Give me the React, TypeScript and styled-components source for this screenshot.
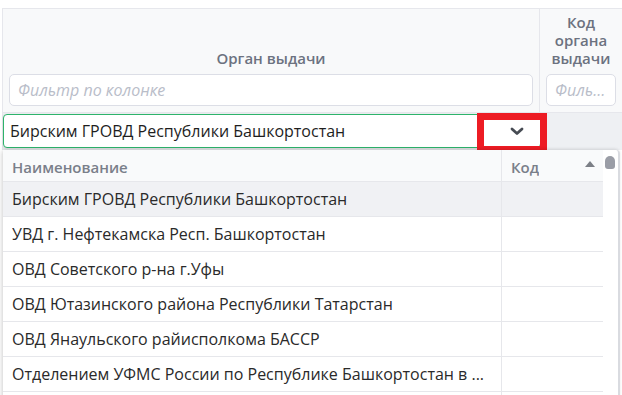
import React from "react";
import styled, { createGlobalStyle } from "styled-components";

interface Option {
    name: string;
    code: string;
}

const options: Option[] = [
    { name: "Бирским ГРОВД Республики Башкортостан", code: "" },
    { name: "УВД г. Нефтекамска Респ. Башкортостан", code: "" },
    { name: "ОВД Советского р-на г.Уфы", code: "" },
    { name: "ОВД Ютазинского района Республики Татарстан", code: "" },
    { name: "ОВД Янаульского райисполкома БАССР", code: "" },
    { name: "Отделением УФМС России по Республике Башкортостан в ...", code: "" },
    { name: "", code: "" },
];

const GlobalStyle = createGlobalStyle`
    html, body {
        margin: 0;
        padding: 0;
        background: #fff;
        font-family: "Open Sans", "Liberation Sans", sans-serif;
        overflow: hidden;
    }
    * { box-sizing: border-box; }
`;

const Page = styled.div`
    width: 622px;
    height: 395px;
    padding-top: 8px;
    overflow: hidden;
`;

const Grid = styled.div`
    margin-left: 2px;
    border-top: 1px solid #e6e7ec;
    border-left: 1px solid #e6e7ec;
`;

const HeaderRow = styled.div`
    display: grid;
    grid-template-columns: 537px 1fr;
    height: 104px;
    background: #f8f9fa;
    border-bottom: 1px solid #e6e7ec;
`;

const HeaderCell = styled.div<{ $last?: boolean }>`
    display: flex;
    flex-direction: column;
    justify-content: flex-end;
    padding: 0 6px 6px 6px;
    border-right: ${(p) => (p.$last ? "none" : "1px solid #e6e7ec")};
`;

const HeaderTitle = styled.div`
    text-align: center;
    font-size: 15px;
    font-weight: 600;
    line-height: 18px;
    color: #6c7280;
    margin-bottom: 7px;
`;

const FilterInput = styled.input`
    width: 100%;
    height: 32px;
    border: 1px solid #dcdee6;
    border-radius: 5px;
    background: #fff;
    padding: 0 8px;
    font-family: inherit;
    font-size: 16px;
    outline: none;
    text-overflow: ellipsis;
    &::placeholder {
        color: #b9bdc9;
        font-style: italic;
    }
`;

const EditRow = styled.div`
    position: relative;
    height: 37px;
    background: #eef0f3;
    padding-top: 1px;
`;

const Combo = styled.div`
    position: relative;
    width: 538px;
    height: 34px;
    display: flex;
    align-items: center;
    background: #fff;
    border: 1px solid #2db36b;
    border-radius: 4px;
    box-shadow: 0 1px 3px rgba(0, 0, 0, 0.12);
    padding-left: 6px;
    font-size: 16px;
    color: #1e1e1e;
`;

const ComboText = styled.span`
    flex: 1;
    white-space: nowrap;
`;

const ComboButton = styled.div`
    width: 52px;
    height: 100%;
    display: flex;
    align-items: center;
    justify-content: center;
    padding-left: 6px;
`;

const Highlight = styled.div`
    position: absolute;
    left: 474px;
    top: 0;
    width: 70px;
    height: 40px;
    border: 7px solid #ed1c24;
    pointer-events: none;
`;

const Dropdown = styled.div`
    position: absolute;
    left: 0;
    top: 37px;
    width: 617px;
    height: 260px;
    display: flex;
    background: #fff;
    border-right: 2px solid #d9dbe0;
    border-radius: 4px 4px 0 0;
    box-shadow: -2px 0 4px rgba(0, 0, 0, 0.12), 0 -1px 3px rgba(0, 0, 0, 0.06);
    z-index: 2;
`;

const Table = styled.div`
    width: 600px;
`;

const Row = styled.div<{ $head?: boolean; $active?: boolean }>`
    display: grid;
    grid-template-columns: 499px 101px;
    height: ${(p) => (p.$head ? "32px" : "35px")};
    background: ${(p) => (p.$head ? "#f9fafb" : p.$active ? "#f0f1f4" : "#fff")};
    border-bottom: 1px solid #e6e7eb;
`;

const Cell = styled.div<{ $head?: boolean; $last?: boolean }>`
    position: relative;
    display: flex;
    align-items: center;
    padding: ${(p) => (p.$head ? "2px 9px 0" : "0 9px")};
    font-size: ${(p) => (p.$head ? "15px" : "16px")};
    font-weight: ${(p) => (p.$head ? 600 : 400)};
    color: ${(p) => (p.$head ? "#7a7f8a" : "#2a2a2a")};
    border-right: ${(p) => (p.$last ? "none" : "1px solid #e6e7eb")};
    min-width: 0;
    span {
        white-space: nowrap;
        overflow: hidden;
        text-overflow: ellipsis;
    }
`;

const SortMark = styled.div`
    position: absolute;
    right: 8px;
    top: 11px;
    width: 0;
    height: 0;
    border-left: 5px solid transparent;
    border-right: 5px solid transparent;
    border-bottom: 6px solid #7c7f86;
`;

const ScrollTrack = styled.div`
    width: 15px;
    padding: 6px 2px 0 2px;
`;

const ScrollThumb = styled.div`
    width: 10px;
    height: 13px;
    border-radius: 5px 5px 3px 3px;
    background: #9a9da6;
`;

const Chevron = () => (
    <svg width="14" height="9" viewBox="0 0 14 9">
        <path d="M2 2 L7 6.5 L12 2" fill="none" stroke="#464b53" strokeWidth="2.8" strokeLinecap="round" strokeLinejoin="round" />
    </svg>
);

export default function App() {
    return (
        <Page>
            <GlobalStyle />
            <Grid>
                <HeaderRow>
                    <HeaderCell>
                        <HeaderTitle>Орган выдачи</HeaderTitle>
                        <FilterInput placeholder="Фильтр по колонке" />
                    </HeaderCell>
                    <HeaderCell $last>
                        <HeaderTitle>
                            Код
                            <br />
                            органа
                            <br />
                            выдачи
                        </HeaderTitle>
                        <FilterInput placeholder="Фильтр по колонке" />
                    </HeaderCell>
                </HeaderRow>
                <EditRow>
                    <Combo>
                        <ComboText>Бирским ГРОВД Республики Башкортостан</ComboText>
                        <ComboButton>
                            <Chevron />
                        </ComboButton>
                    </Combo>
                    <Dropdown>
                        <Table>
                            <Row $head>
                                <Cell $head>
                                    <span>Наименование</span>
                                </Cell>
                                <Cell $head $last>
                                    <span>Код</span>
                                    <SortMark />
                                </Cell>
                            </Row>
                            {options.map((o, i) => (
                                <Row key={i} $active={i === 0}>
                                    <Cell>
                                        <span>{o.name}</span>
                                    </Cell>
                                    <Cell $last>
                                        <span>{o.code}</span>
                                    </Cell>
                                </Row>
                            ))}
                        </Table>
                        <ScrollTrack>
                            <ScrollThumb />
                        </ScrollTrack>
                    </Dropdown>
                    <Highlight />
                </EditRow>
            </Grid>
        </Page>
    );
}
